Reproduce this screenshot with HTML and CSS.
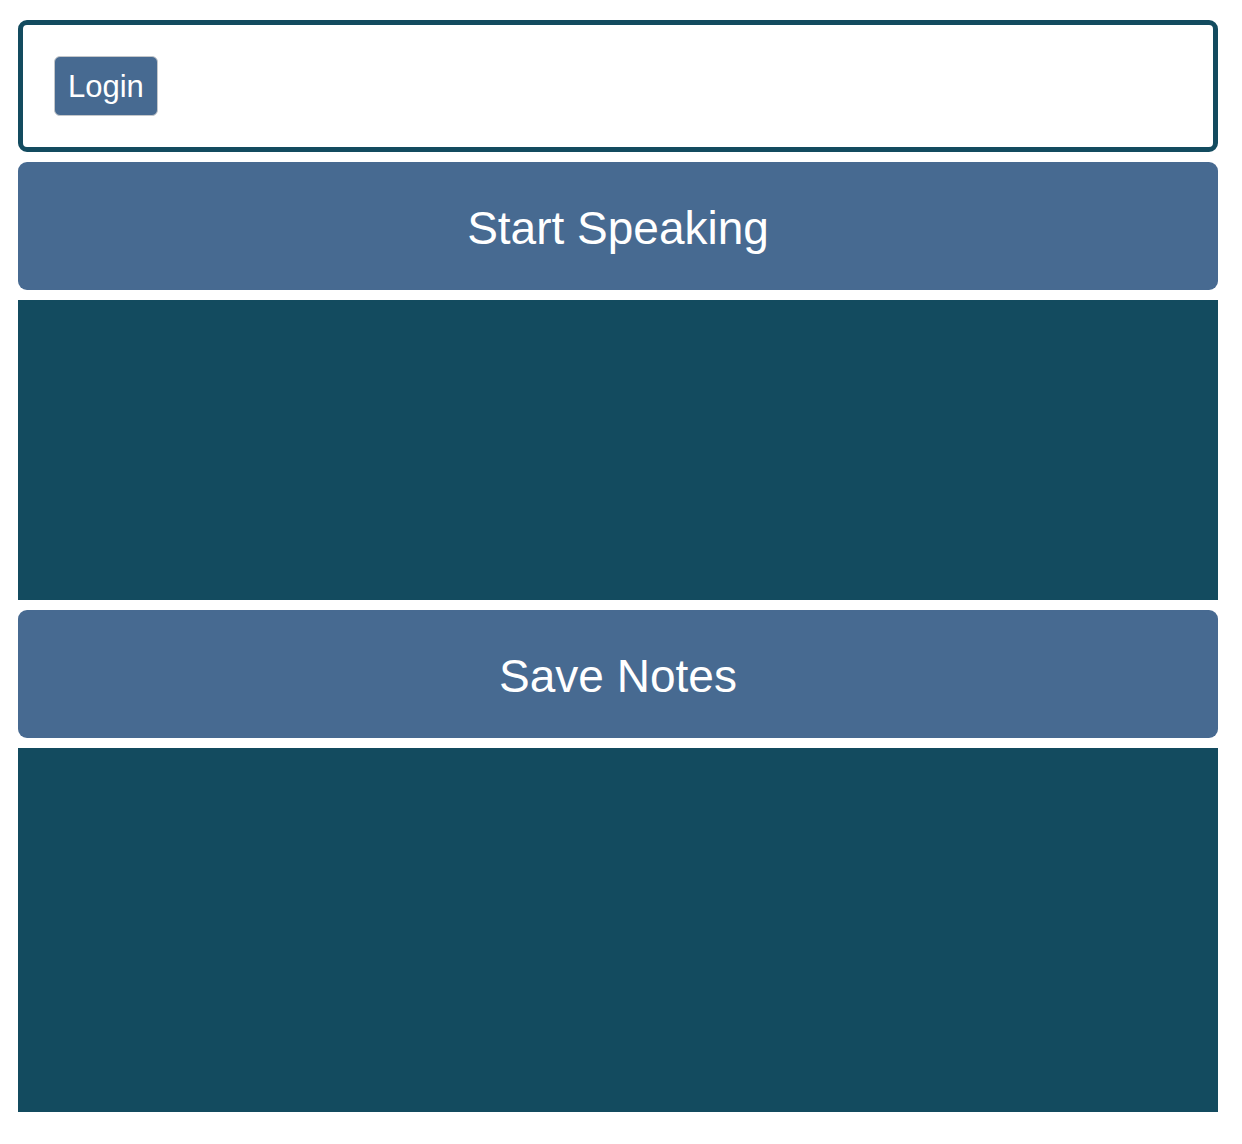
FILE: index.html
```html
<!DOCTYPE html>
<html lang="en">
<head>
<meta charset="utf-8">
<title>Notes</title>
<link rel="stylesheet" href="styles.css">
</head>
<body>
<main class="app">
  <header class="topbar">
    <button class="login">Login</button>
  </header>
  <button class="big-btn">Start Speaking</button>
  <div class="panel panel-speech"></div>
  <button class="big-btn">Save Notes</button>
  <div class="panel panel-notes"></div>
</main>
</body>
</html>
```
FILE: styles.css
```css
html, body {
  margin: 0;
  padding: 0;
  background: #ffffff;
}
.app {
  display: flex;
  flex-direction: column;
  gap: 10px;
  padding: 20px 24px 32px 18px;
  font-family: "Liberation Sans", Arial, Helvetica, sans-serif;
}
.topbar {
  border: 5px solid #134b5f;
  border-radius: 9px;
  padding: 31px 31px 31px;
  display: flex;
  align-items: flex-start;
}
.login {
  background: #476a91;
  color: #ffffff;
  border: 1.5px solid #c4c7ca;
  border-radius: 6px;
  height: 60px;
  padding: 0 13px;
  font-family: inherit;
  font-size: 31px;
  line-height: 1;
  cursor: pointer;
}
.big-btn {
  display: block;
  width: 100%;
  height: 128px;
  padding: 4px 0 0;
  background: #476a91;
  color: #ffffff;
  border: none;
  border-radius: 9px;
  font-family: inherit;
  font-size: 46px;
  line-height: 1;
  cursor: pointer;
}
.panel {
  background: #134b5f;
}
.panel-speech {
  height: 300px;
}
.panel-notes {
  height: 364px;
}
```
